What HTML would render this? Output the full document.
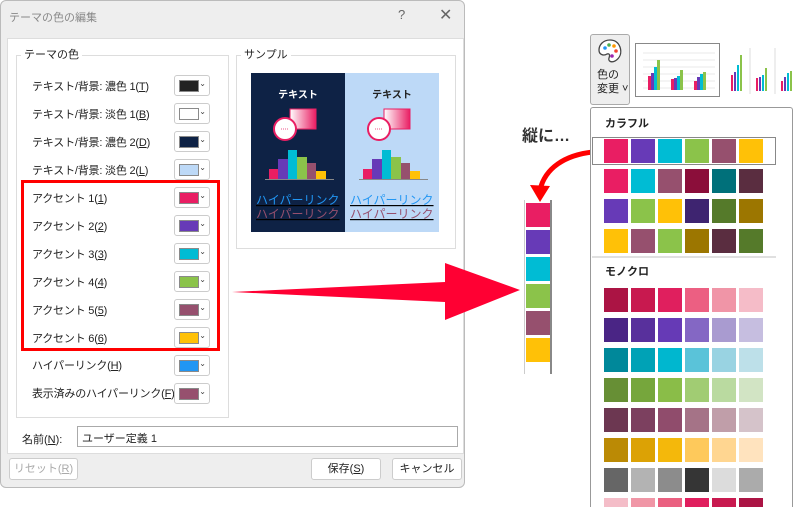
<!DOCTYPE html>
<html style="overflow:hidden;height:507px"><head><meta charset="utf-8"><style>
body{margin:0;width:800px;height:507px;background:#fff;position:relative;overflow:hidden;font-family:"Liberation Sans","Noto Sans CJK JP",sans-serif;font-size:12px;color:#222}
.a{position:absolute}
.lbl{position:absolute;left:32px;font-size:11px;letter-spacing:-0.2px}
.cb{position:absolute;left:174px;width:36px;height:21px;border:1px solid #ccc;border-radius:3px;background:#fff;box-sizing:border-box}
.cb i{position:absolute;left:4px;top:4px;width:20px;height:12px;border:1px solid #8a8a8a;box-sizing:border-box}
.cb b{position:absolute;right:3px;top:3px;font-size:8px;font-weight:normal;color:#444}
.sw{position:absolute;width:24px;height:24px}
.btn{position:absolute;height:20px;border:1px solid #ccc;border-radius:3px;background:#fff;text-align:center;line-height:20px;font-size:11px}
</style></head><body>
<div class="a" style="left:0;top:0;width:465px;height:488px;background:#eeeeee;border:1px solid #bbb;border-radius:6px;box-sizing:border-box"></div>
<div class="a" style="left:9px;top:9px;color:#888;font-size:11px">テーマの色の編集</div>
<div class="a" style="left:398px;top:7px;color:#666;font-size:13px">?</div>
<div class="a" style="left:439px;top:5px;color:#666;font-size:16px">✕</div>
<div class="a" style="left:7px;top:38px;width:455px;height:414px;background:#fff;border:1px solid #ddd"></div>
<div class="a" style="left:16px;top:55px;width:211px;height:361px;border:1px solid #ddd"></div>
<div class="a" style="left:21px;top:46px;background:#fff;padding:0 3px;font-size:11px">テーマの色</div>
<div class="a" style="left:236px;top:55px;width:218px;height:192px;border:1px solid #ddd"></div>
<div class="a" style="left:241px;top:46px;background:#fff;padding:0 3px;font-size:11px">サンプル</div>

<div class="lbl" style="top:78px">テキスト/背景: 濃色 1(<u>T</u>)</div><div class="cb" style="top:75px"><i style="background:#222"></i><b>⌄</b></div>
<div class="lbl" style="top:106px">テキスト/背景: 淡色 1(<u>B</u>)</div><div class="cb" style="top:103px"><i style="background:#fff"></i><b>⌄</b></div>
<div class="lbl" style="top:134px">テキスト/背景: 濃色 2(<u>D</u>)</div><div class="cb" style="top:131px"><i style="background:#0e2245"></i><b>⌄</b></div>
<div class="lbl" style="top:162px">テキスト/背景: 淡色 2(<u>L</u>)</div><div class="cb" style="top:159px"><i style="background:#bdd9f7"></i><b>⌄</b></div>
<div class="lbl" style="top:190px">アクセント 1(<u>1</u>)</div><div class="cb" style="top:187px"><i style="background:#e91e63"></i><b>⌄</b></div>
<div class="lbl" style="top:218px">アクセント 2(<u>2</u>)</div><div class="cb" style="top:215px"><i style="background:#673ab7"></i><b>⌄</b></div>
<div class="lbl" style="top:246px">アクセント 3(<u>3</u>)</div><div class="cb" style="top:243px"><i style="background:#00bcd4"></i><b>⌄</b></div>
<div class="lbl" style="top:274px">アクセント 4(<u>4</u>)</div><div class="cb" style="top:271px"><i style="background:#8bc34a"></i><b>⌄</b></div>
<div class="lbl" style="top:302px">アクセント 5(<u>5</u>)</div><div class="cb" style="top:299px"><i style="background:#96506e"></i><b>⌄</b></div>
<div class="lbl" style="top:330px">アクセント 6(<u>6</u>)</div><div class="cb" style="top:327px"><i style="background:#ffc107"></i><b>⌄</b></div>
<div class="lbl" style="top:357px">ハイパーリンク(<u>H</u>)</div><div class="cb" style="top:355px"><i style="background:#2196f3"></i><b>⌄</b></div>
<div class="lbl" style="top:385px">表示済みのハイパーリンク(<u>F</u>)</div><div class="cb" style="top:383px"><i style="background:#96506e"></i><b>⌄</b></div>
<div class="a" style="left:21px;top:180px;width:199px;height:171px;border:3px solid #f00;box-sizing:border-box"></div>

<div class="a" style="left:251px;top:73px;width:94px;height:159px;background:#0e2245"></div>
<div class="a" style="left:345px;top:73px;width:94px;height:159px;background:#bdd9f7"></div>
<svg class="a" style="left:251px;top:73px" width="188" height="159">
<defs><linearGradient id="g"><stop offset="0" stop-color="#fff"/><stop offset="1" stop-color="#e91e63"/></linearGradient></defs>
<g font-size="10" font-weight="bold" text-anchor="middle"><text x="47" y="25" fill="#fff">テキスト</text><text x="141" y="25" fill="#222">テキスト</text></g>
<g id="sh"><rect x="39" y="36" width="26" height="20" fill="url(#g)" stroke="#e91e63"/><circle cx="34" cy="56" r="11" fill="#fff" stroke="#e91e63" stroke-width="2"/><path d="M30 56h8" stroke="#e91e63" stroke-width="0.8" stroke-dasharray="1 1"/>
<rect x="18" y="96" width="9" height="10" fill="#e91e63"/><rect x="27" y="86" width="10" height="20" fill="#673ab7"/><rect x="37" y="77" width="9" height="29" fill="#00bcd4"/><rect x="46" y="84" width="10" height="22" fill="#8bc34a"/><rect x="56" y="90" width="9" height="16" fill="#96506e"/><rect x="65" y="98" width="10" height="8" fill="#ffc107"/><path d="M14 106.5h69" stroke="#888"/></g>
<use href="#sh" x="94"/>
<g font-size="12" text-decoration="underline"><text x="5" y="131" fill="#2196f3">ハイパーリンク</text><text x="5" y="145" fill="#96506e">ハイパーリンク</text><text x="99" y="131" fill="#2196f3">ハイパーリンク</text><text x="99" y="145" fill="#96506e">ハイパーリンク</text></g>
</svg>

<div class="a" style="left:22px;top:431px;font-size:11px">名前(<u>N</u>):</div>
<div class="a" style="left:77px;top:426px;width:381px;height:21px;border:1px solid #aaa;box-sizing:border-box;padding:3px 4px;font-size:11px">ユーザー定義 1</div>
<div class="btn" style="left:9px;top:458px;width:67px;color:#aaa">リセット(<u>R</u>)</div>
<div class="btn" style="left:311px;top:458px;width:68px">保存(<u>S</u>)</div>
<div class="btn" style="left:392px;top:458px;width:68px">キャンセル</div>

<svg class="a" style="left:0;top:0" width="800" height="507"><path d="M232 292 L445 282 L445 263 L520 290 L445 320 L445 302 Z" fill="#ff0033"/>
<path d="M593 152 C565 155 545 168 540 190" stroke="#f00" stroke-width="5" fill="none"/><path d="M530 185 L540 202 L550 186 Z" fill="#f00"/></svg>

<div class="a" style="left:590px;top:34px;width:40px;height:71px;border:1px solid #aaa;border-radius:3px;background:#eee;box-sizing:border-box"></div>
<svg class="a" style="left:597px;top:38px" width="26" height="26"><path d="M13 2C6 2 2 7 2 12c0 5 5 6 8 4 3-1 3 2 2 4-1 3 2 5 6 3 5-3 7-8 5-14C21 4 17 2 13 2z" fill="#fff" stroke="#444" stroke-width="1.3"/><circle cx="8" cy="10" r="1.8" fill="#2196f3"/><circle cx="12" cy="7" r="1.8" fill="#4caf50"/><circle cx="17" cy="8" r="1.8" fill="#ff9800"/><circle cx="19" cy="13" r="1.8" fill="#f44336"/><circle cx="15" cy="18" r="1.8" fill="#9c27b0"/></svg>
<div class="a" style="left:597px;top:68px;font-size:11px;line-height:14px">色の<br>変更 ˅</div>
<div class="a" style="left:635px;top:43px;width:85px;height:54px;border:1px solid #888;background:#fff;box-sizing:border-box"></div>
<svg class="a" style="left:640px;top:48px" width="80" height="48"><g stroke="#e8e8e8"><path d="M3 5h72M3 12h72M3 19h72M3 26h72M3 33h72M3 40h72"/></g>
<g><rect x="8" y="28" width="3" height="14" fill="#e91e63"/><rect x="11" y="25" width="3" height="17" fill="#673ab7"/><rect x="14" y="19" width="3" height="23" fill="#00bcd4"/><rect x="17" y="12" width="3" height="30" fill="#8bc34a"/><rect x="31" y="31" width="3" height="11" fill="#e91e63"/><rect x="34" y="30" width="3" height="12" fill="#673ab7"/><rect x="37" y="28" width="3" height="14" fill="#00bcd4"/><rect x="40" y="22" width="3" height="20" fill="#8bc34a"/><rect x="54" y="33" width="3" height="9" fill="#e91e63"/><rect x="57" y="29" width="3" height="13" fill="#673ab7"/><rect x="60" y="26" width="3" height="16" fill="#00bcd4"/><rect x="63" y="24" width="3" height="18" fill="#8bc34a"/></g></svg>
<svg class="a" style="left:725px;top:45px" width="75" height="50"><path d="M25 3v46M50 3v46" stroke="#ddd"/><g><rect x="6" y="30" width="2" height="16" fill="#e91e63"/><rect x="9" y="27" width="2" height="19" fill="#673ab7"/><rect x="12" y="20" width="2" height="26" fill="#00bcd4"/><rect x="15" y="10" width="2" height="36" fill="#8bc34a"/><rect x="31" y="33" width="2" height="13" fill="#e91e63"/><rect x="34" y="32" width="2" height="14" fill="#673ab7"/><rect x="37" y="30" width="2" height="16" fill="#00bcd4"/><rect x="40" y="23" width="2" height="23" fill="#8bc34a"/><rect x="56" y="36" width="2" height="10" fill="#e91e63"/><rect x="59" y="32" width="2" height="14" fill="#673ab7"/><rect x="62" y="28" width="2" height="18" fill="#00bcd4"/><rect x="65" y="26" width="2" height="20" fill="#8bc34a"/></g></svg>
<div class="a" style="left:590px;top:107px;width:203px;height:400px;border:1px solid #999;border-bottom:none;border-radius:3px 3px 0 0;background:#fff;box-sizing:border-box;overflow:hidden"></div>
<div class="a" style="left:605px;top:115px;font-size:11px;font-weight:bold">カラフル</div>
<div class="a" style="left:592px;top:137px;width:184px;height:28px;border:1.5px solid #888;box-sizing:border-box"></div>
<div class="a" style="left:592px;top:256px;width:184px;height:2px;background:#e0e0e0"></div>
<div class="a" style="left:605px;top:263px;font-size:11px;font-weight:bold">モノクロ</div>
<div class="a" style="left:522px;top:122px;font-size:16px;font-weight:bold;color:#333">縦に…</div>
<div class="a" style="left:524px;top:200px;width:28px;height:174px;border-left:1px solid #ccc;border-right:2px solid #888;box-sizing:border-box"></div>
<div id="sw"></div>
<script>
var out='';
function s(x,y,c,h){out+='<div class="sw" style="left:'+x+'px;top:'+y+'px;background:'+c+(h?';height:'+h+'px':'')+'"></div>';}
var col=[["#e91e63","#673ab7","#00bcd4","#8bc34a","#96506e","#ffc107"],["#e91e63","#00bcd4","#96506e","#8b0e3a","#00707a","#5a2d40"],["#673ab7","#8bc34a","#ffc107","#3e2470","#557a2a","#9c7600"],["#ffc107","#96506e","#8bc34a","#9c7600","#5a2d40","#557a2a"]];
col.forEach(function(r,i){r.forEach(function(c,j){s(604+27*j,139+30*i,c);});});
var mono=[["#ab1444","#c8194f","#e01f5e","#ec5f82","#f095a7","#f5bcc8"],["#4a2585","#58309c","#663ab6","#8467c4","#a99bd0","#c6bee0"],["#00889a","#00a2b6","#00b7cf","#5ac3d9","#99d3e2","#bde0e9"],["#678f35","#76a63c","#8abd48","#a1cc73","#badaa0","#d2e4c4"],["#6c3751","#7c405f","#904c6c","#a57387","#c09ea9","#d5c3ca"],["#bb8a05","#dca205","#f4b80b","#fec95b","#ffd691","#ffe3be"],["#666666","#b3b3b3","#8c8c8c","#353535","#dcdcdc","#ababab"],["#f4bdc8","#f096a6","#ea6080","#e01f5e","#c8194f","#ab1444"]];
mono.forEach(function(r,i){r.forEach(function(c,j){s(604+27*j,288+30*i,c,i==7?9:0);});});
col[0].forEach(function(c,i){s(526,203+27*i,c);});
document.getElementById('sw').innerHTML=out;
</script>
</body></html>
